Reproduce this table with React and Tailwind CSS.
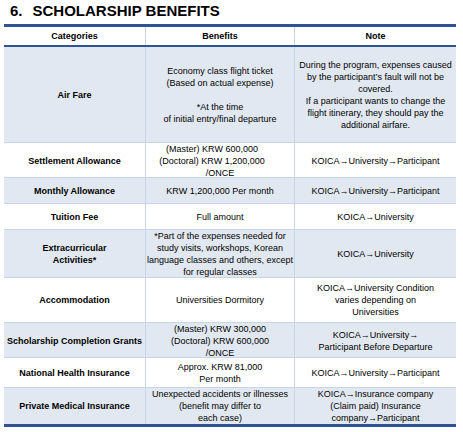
import React from "react";

const rows = [
  {
    h: "h-[96px]",
    blue: true,
    cat: ["Air Fare"],
    ben: ["Economy class flight ticket", "(Based on actual expense)", "\u00a0", "*At the time", "of initial entry/final departure"],
    note: [
      "During the program, expenses caused",
      "by the participant\u2019s fault will not be",
      "covered.",
      "If a participant wants to change the",
      "flight itinerary, they should pay the",
      "additional airfare.",
    ],
  },
  {
    h: "h-[35px]",
    blue: false,
    cat: ["Settlement Allowance"],
    ben: ["(Master) KRW 600,000", "(Doctoral) KRW 1,200,000", "/ONCE"],
    shift: [true, true, false],
    note: ["KOICA\u2192University\u2192Participant"],
  },
  {
    h: "h-[26px]",
    blue: true,
    cat: ["Monthly Allowance"],
    ben: ["KRW 1,200,000 Per month"],
    note: ["KOICA\u2192University\u2192Participant"],
  },
  {
    h: "h-[26px]",
    blue: false,
    cat: ["Tuition Fee"],
    ben: ["Full amount"],
    note: ["KOICA\u2192University"],
  },
  {
    h: "h-[48px]",
    blue: true,
    cat: ["Extracurricular", "Activities*"],
    ben: ["*Part of the expenses needed for", "study visits, workshops, Korean", "language classes and others, except", "for regular classes"],
    note: ["KOICA\u2192University"],
  },
  {
    h: "h-[45px]",
    blue: false,
    cat: ["Accommodation"],
    ben: ["Universities Dormitory"],
    note: ["KOICA\u2192University Condition", "varies depending on", "Universities"],
  },
  {
    h: "h-[35px]",
    blue: true,
    cat: ["Scholarship Completion Grants"],
    ben: ["(Master) KRW 300,000", "(Doctoral) KRW 600,000", "/ONCE"],
    note: ["KOICA\u2192University\u2192", "Participant Before Departure"],
  },
  {
    h: "h-[30px]",
    blue: false,
    cat: ["National Health Insurance"],
    ben: ["Approx. KRW 81,000", "Per month"],
    note: ["KOICA\u2192University\u2192Participant"],
  },
  {
    h: "h-[36px]",
    blue: true,
    last: true,
    cat: ["Private Medical Insurance"],
    ben: ["Unexpected accidents or illnesses", "(benefit may differ to", "each case)"],
    note: ["KOICA\u2192Insurance company", "(Claim paid) Insurance", "company\u2192Participant"],
  },
];

function Lines({ lines, bold, shift }) {
  return (
    <div className={`flex flex-col items-center justify-center text-center ${bold ? "font-bold" : ""}`}>
      {lines.map((l, i) => (
        <div key={i} className={`whitespace-nowrap ${shift && shift[i] ? "pr-[16px]" : ""}`}>
          {l}
        </div>
      ))}
    </div>
  );
}

export default function App() {
  return (
    <div className="w-[463px] h-[432px] bg-white text-black font-['Liberation_Sans',Arial,sans-serif]">
      <h1 className="pl-[10px] pt-[2px] h-[24px] text-[15px] leading-[18px] font-bold flex">
        <span>6.</span>
        <span className="ml-[10px]">SCHOLARSHIP BENEFITS</span>
      </h1>
      <div className="ml-[4px] w-[452px] border-t-[3px] border-b-[3px] border-[#2f5496] text-[9px] leading-[12px]">
        <div className="grid grid-cols-[141px_149px_162px] h-[20px] border-b-[2px] border-[#2f5496] font-bold">
          <div className="flex items-center justify-center">Categories</div>
          <div className="flex items-center justify-center border-l border-[#c8d4e8]">Benefits</div>
          <div className="flex items-center justify-center border-l border-[#c8d4e8]">Note</div>
        </div>
        {rows.map((r, i) => (
          <div
            key={i}
            className={`grid grid-cols-[141px_149px_162px] ${r.h} ${r.blue ? "bg-[#e2e8f1]" : "bg-white"} ${r.last ? "" : "border-b border-[#c8d4e8]"}`}
          >
            <div className="flex items-center justify-center">
              <Lines lines={r.cat} bold />
            </div>
            <div className="flex items-center justify-center border-l border-[#c8d4e8]">
              <Lines lines={r.ben} shift={r.shift} />
            </div>
            <div className="flex items-center justify-center border-l border-[#c8d4e8]">
              <Lines lines={r.note} />
            </div>
          </div>
        ))}
      </div>
    </div>
  );
}
